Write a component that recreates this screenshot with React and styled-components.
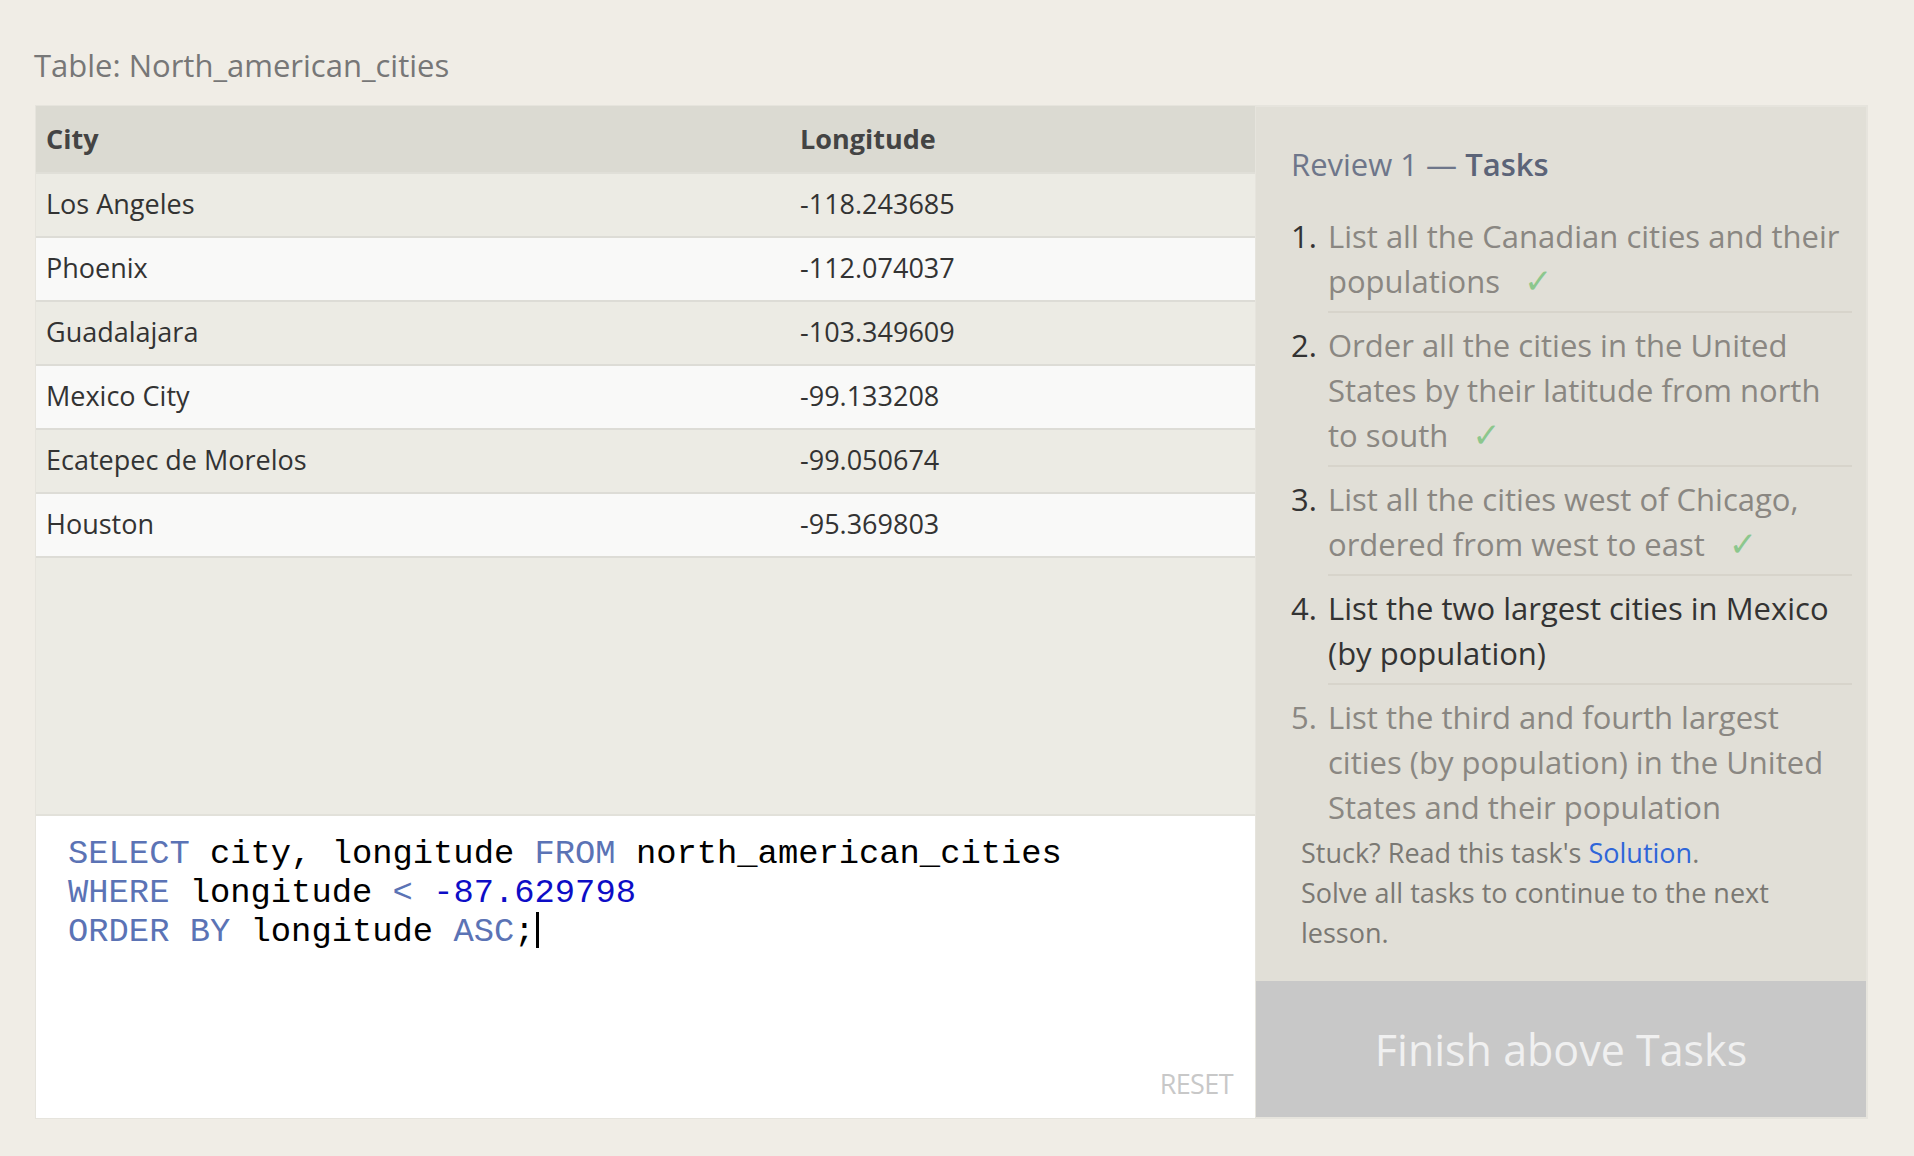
import React from "react";
import styled, { createGlobalStyle } from "styled-components";

const GlobalStyle = createGlobalStyle`
    body {
        margin: 0;
        background: #f0ede6;
        font-family: "Open Sans", "Liberation Sans", sans-serif;
    }
`;

const Page = styled.div`
    padding: 45px 46px 37px 34px;
    display: flex;
    flex-direction: column;
    gap: 20px;
`;

const TableTitle = styled.div`
    font-size: 31px;
    line-height: 40px;
    color: #777;
`;

const Panels = styled.div`
    display: flex;
    height: 1014px;
    margin-left: 1px;
`;

const LeftPanel = styled.div`
    width: 1221px;
    display: flex;
    flex-direction: column;
    border: 1px solid #e6e4dd;
    box-sizing: border-box;
`;

const TableArea = styled.div`
    height: 710px;
    background: #ecebe4;
    border-bottom: 2px solid #e2e1da;
    box-sizing: border-box;
`;

const Table = styled.table`
    width: 100%;
    border-collapse: collapse;
    font-size: 27px;
    color: #333;
`;

const HeadCell = styled.th`
    height: 67px;
    padding: 0 10px 2px;
    text-align: left;
    font-weight: 700;
    color: #444;
    background: #dbdad2;
    border-bottom: 2px solid #e0dfd8;
    width: ${({w}) => w || "auto"};
    box-sizing: border-box;
`;

const Row = styled.tr`
    background: ${({even}) => even ? "#f9f9f8" : "#ecebe4"};
    border-bottom: 2px solid #dddcd6;
`;

const Cell = styled.td`
    height: 64px;
    padding: 0 10px 3px;
    box-sizing: border-box;
`;

const Editor = styled.div`
    flex: 1;
    background: #fff;
    position: relative;
    padding: 19px 32px;
    font-family: "Liberation Mono", "DejaVu Sans Mono", monospace;
    font-size: 33.8px;
    line-height: 38.5px;
    color: #000;
`;

const CodeLine = styled.div`
    white-space: pre;
`;

const Kw = styled.span`
    color: #5b73b5;
`;

const Num = styled.span`
    color: #0d0dc6;
`;

const Caret = styled.span`
    display: inline-block;
    width: 3px;
    height: 36px;
    background: #000;
    vertical-align: -7px;
    margin-left: 1px;
`;

const Reset = styled.div`
    position: absolute;
    right: 22px;
    bottom: 15px;
    font-family: "Open Sans", sans-serif;
    font-size: 27px;
    letter-spacing: -0.6px;
    color: #c8c8c8;
`;

const RightPanel = styled.div`
    flex: 1;
    background: #e1dfd7;
    border: 2px solid #e6e4dd;
    border-left: none;
    display: flex;
    flex-direction: column;
`;

const TaskBox = styled.div`
    padding: 35px 14px 0 35px;
`;

const ReviewTitle = styled.h2`
    margin: 0 0 18px;
    font-size: 31px;
    line-height: 44px;
    font-weight: 400;
    color: #6e768a;

    & > b {
        font-weight: 600;
        color: #5c6478;
    }
`;

const TaskList = styled.ol`
    margin: 0;
    padding: 0;
    list-style: none;
`;

const Task = styled.li`
    display: flex;
    font-size: 31px;
    line-height: 45px;
    padding: 10px 0 9px;
    position: relative;
    color: ${({state}) => state === "current" ? "#333" : "#8a8782"};

    &:not(:last-child)::after {
        content: "";
        position: absolute;
        left: 37px;
        right: 0;
        bottom: 0;
        height: 2px;
        background: #d7d4cb;
    }

    &:last-child {
        padding-bottom: 0;
    }
`;

const TaskNum = styled.span`
    width: 37px;
    flex-shrink: 0;
    color: ${({state}) => state === "todo" ? "#8a8782" : "#333"};
`;

const Check = styled.span`
    font-family: "DejaVu Sans", sans-serif;
    font-size: 34px;
    line-height: 0;
    color: #8cc78d;
    margin-left: 24px;
`;

const Help = styled.div`
    padding: 3px 0 0 10px;
    font-size: 27px;
    line-height: 40px;
    color: #7a7873;

    & a {
        color: #2f66d9;
        text-decoration: none;
    }
`;

const FinishButton = styled.div`
    margin-top: auto;
    height: 136px;
    background: #c8c8c8;
    color: #f0f0f0;
    font-size: 43px;
    display: flex;
    align-items: center;
    justify-content: center;
`;

const rows = [
    ["Los Angeles", "-118.243685"],
    ["Phoenix", "-112.074037"],
    ["Guadalajara", "-103.349609"],
    ["Mexico City", "-99.133208"],
    ["Ecatepec de Morelos", "-99.050674"],
    ["Houston", "-95.369803"],
];

const tasks = [
    {text: "List all the Canadian cities and their populations", state: "done"},
    {text: "Order all the cities in the United States by their latitude from north to south", state: "done"},
    {text: "List all the cities west of Chicago, ordered from west to east", state: "done"},
    {text: "List the two largest cities in Mexico (by population)", state: "current"},
    {text: "List the third and fourth largest cities (by population) in the United States and their population", state: "todo"},
];

export default function App() {
    return (
        <Page>
            <GlobalStyle />
            <TableTitle>Table: North_american_cities</TableTitle>
            <Panels>
                <LeftPanel>
                    <TableArea>
                        <Table>
                            <thead>
                                <tr>
                                    <HeadCell w="754px">City</HeadCell>
                                    <HeadCell>Longitude</HeadCell>
                                </tr>
                            </thead>
                            <tbody>
                                {rows.map(([city, lon], i) => (
                                    <Row key={city} even={i % 2 === 1}>
                                        <Cell>{city}</Cell>
                                        <Cell>{lon}</Cell>
                                    </Row>
                                ))}
                            </tbody>
                        </Table>
                    </TableArea>
                    <Editor>
                        <CodeLine><Kw>SELECT</Kw> city, longitude <Kw>FROM</Kw> north_american_cities</CodeLine>
                        <CodeLine><Kw>WHERE</Kw> longitude <Kw>&lt;</Kw> <Num>-87.629798</Num></CodeLine>
                        <CodeLine><Kw>ORDER BY</Kw> longitude <Kw>ASC</Kw>;<Caret /></CodeLine>
                        <Reset>RESET</Reset>
                    </Editor>
                </LeftPanel>
                <RightPanel>
                    <TaskBox>
                        <ReviewTitle>Review 1 — <b>Tasks</b></ReviewTitle>
                        <TaskList>
                            {tasks.map((t, i) => (
                                <Task key={i} state={t.state}>
                                    <TaskNum state={t.state}>{i + 1}.</TaskNum>
                                    <span>
                                        {t.text}
                                        {t.state === "done" && <Check>✓</Check>}
                                    </span>
                                </Task>
                            ))}
                        </TaskList>
                        <Help>
                            Stuck? Read this task's <a href="#">Solution</a>.<br />
                            Solve all tasks to continue to the next lesson.
                        </Help>
                    </TaskBox>
                    <FinishButton>Finish above Tasks</FinishButton>
                </RightPanel>
            </Panels>
        </Page>
    );
}
